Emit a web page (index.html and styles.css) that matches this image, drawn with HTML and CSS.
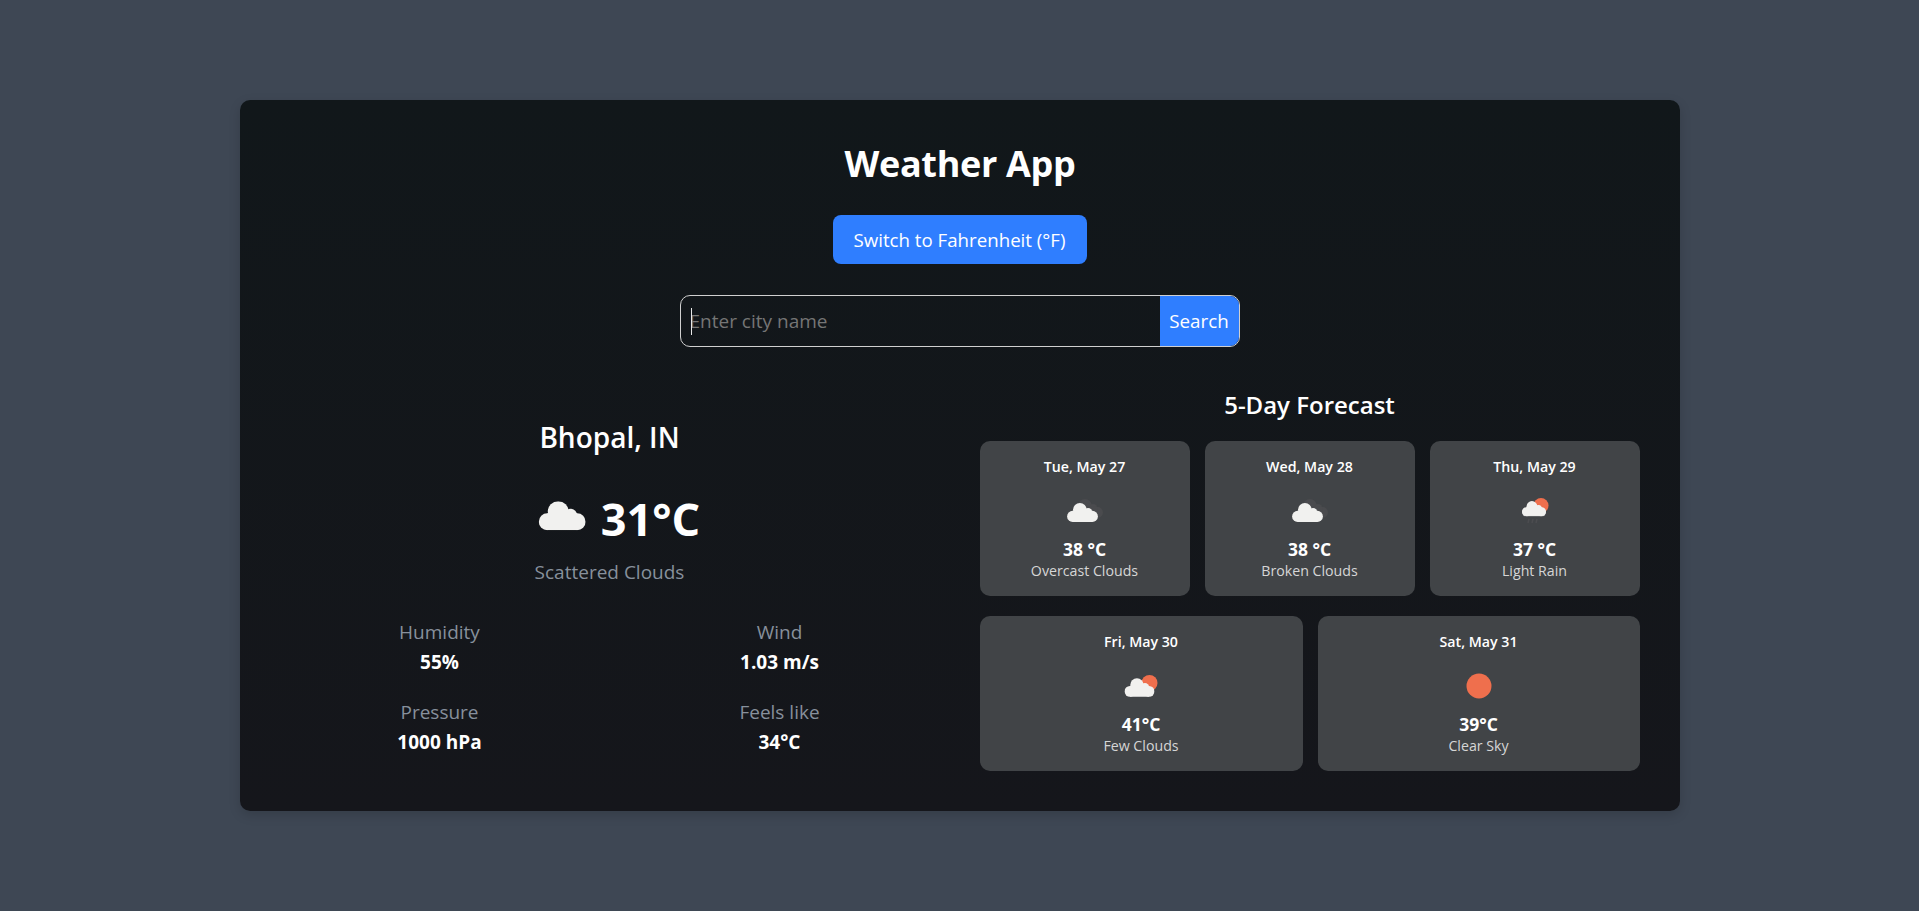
FILE: index.html
```html
<!DOCTYPE html>
<html lang="en-US">
    <head>
        <meta charset="utf-8">
        <title>Weather App</title>
        <meta name="viewport" content="width=device-width, initial-scale=1">
        <link rel="stylesheet" href="styles.css">
    </head>

    <body>
        <svg class="defs" width="0" height="0" aria-hidden="true">
            <symbol id="cloud" viewBox="0 0 47 29">
                <circle cx="8.5" cy="20.5" r="8.5"></circle>
                <circle cx="19.5" cy="10.5" r="10.5"></circle>
                <circle cx="32" cy="14" r="6.5"></circle>
                <circle cx="38.5" cy="20.5" r="8.5"></circle>
                <rect x="8.5" y="12" width="30" height="17"></rect>
            </symbol>
        </svg>

        <main class="app">
            <h1 class="title">Weather App</h1>
            <button class="unitBtn" type="button">Switch to Fahrenheit (°F)</button>

            <form class="search">
                <span class="caret"></span>
                <input class="searchInput" type="text" placeholder="Enter city name">
                <button class="searchBtn" type="button">Search</button>
            </form>

            <div class="columns">
                <section class="current">
                    <h2 class="city">Bhopal, IN</h2>
                    <div class="nowRow">
                        <svg class="nowIcon" viewBox="0 0 50 50">
                            <use href="#cloud" x="7" y="14" width="31" height="19" fill="#f1f1ef"></use>
                        </svg>
                        <span class="nowTemp">31°C</span>
                    </div>
                    <p class="nowDesc">Scattered Clouds</p>
                    <div class="stats">
                        <div class="stat"><span class="statLabel">Humidity</span><strong class="statValue">55%</strong></div>
                        <div class="stat"><span class="statLabel">Wind</span><strong class="statValue">1.03 m/s</strong></div>
                        <div class="stat"><span class="statLabel">Pressure</span><strong class="statValue">1000 hPa</strong></div>
                        <div class="stat"><span class="statLabel">Feels like</span><strong class="statValue">34°C</strong></div>
                    </div>
                </section>

                <section class="forecast">
                    <h2 class="forecastTitle">5-Day Forecast</h2>
                    <div class="dayRow dayRow3">
                        <div class="day">
                            <h3 class="dayDate">Tue, May 27</h3>
                            <svg class="dayIcon" viewBox="0 0 50 50">
                                <use href="#cloud" x="12" y="13" width="31" height="19" fill="#4a4b4e"></use>
                                <use href="#cloud" x="7" y="17" width="31" height="19" fill="#f1f1ef"></use>
                            </svg>
                            <p class="dayTemp">38 °C</p>
                            <p class="dayDesc">Overcast Clouds</p>
                        </div>
                        <div class="day">
                            <h3 class="dayDate">Wed, May 28</h3>
                            <svg class="dayIcon" viewBox="0 0 50 50">
                                <use href="#cloud" x="12" y="13" width="31" height="19" fill="#4a4b4e"></use>
                                <use href="#cloud" x="7" y="17" width="31" height="19" fill="#f1f1ef"></use>
                            </svg>
                            <p class="dayTemp">38 °C</p>
                            <p class="dayDesc">Broken Clouds</p>
                        </div>
                        <div class="day">
                            <h3 class="dayDate">Thu, May 29</h3>
                            <svg class="dayIcon" viewBox="0 0 50 50">
                                <circle cx="31" cy="19.5" r="7.5" fill="#ef6f4d"></circle>
                                <use href="#cloud" x="12" y="15.5" width="24" height="15" fill="#c9c9c8"></use>
                                <use href="#cloud" x="12" y="15" width="24" height="15" fill="#f1f1ef"></use>
                                <path d="M19 33l-1 4M23 33l-1 4M27 33l-1 4" stroke="#4c4d50" stroke-width="1.5"></path>
                            </svg>
                            <p class="dayTemp">37 °C</p>
                            <p class="dayDesc">Light Rain</p>
                        </div>
                    </div>
                    <div class="dayRow dayRow2">
                        <div class="day">
                            <h3 class="dayDate">Fri, May 30</h3>
                            <svg class="dayIcon" viewBox="0 0 50 50">
                                <circle cx="33.5" cy="22" r="8" fill="#ef6f4d"></circle>
                                <use href="#cloud" x="8.5" y="17" width="30" height="19" fill="#f1f1ef"></use>
                            </svg>
                            <p class="dayTemp">41°C</p>
                            <p class="dayDesc">Few Clouds</p>
                        </div>
                        <div class="day">
                            <h3 class="dayDate">Sat, May 31</h3>
                            <svg class="dayIcon" viewBox="0 0 50 50">
                                <circle cx="25" cy="25" r="12.5" fill="#ef6f4d"></circle>
                            </svg>
                            <p class="dayTemp">39°C</p>
                            <p class="dayDesc">Clear Sky</p>
                        </div>
                    </div>
                </section>
            </div>
        </main>
    </body>
</html>
```

FILE: styles.css
```css
* {
    box-sizing: border-box;
}

body {
    margin: 0;
    height: 911px;
    padding-top: 100px;
    overflow: hidden;
    background-color: #3e4754;
    color: #fff;
    font-family: "Open Sans", "Noto Sans", sans-serif;
}

.defs {
    position: absolute;
}

h1, h2, h3, p {
    margin: 0;
}

.app {
    display: flex;
    flex-direction: column;
    align-items: center;
    width: 1440px;
    margin: 0 auto;
    padding: 40px 40px 40px 30px;
    border-radius: 10px;
    background: linear-gradient(#11171a, #15161b);
    box-shadow: 0 4px 12px rgba(0, 0, 0, 0.15);
}

.title {
    margin-left: 11px;
    font-size: 36px;
    letter-spacing: -0.3px;
    line-height: 48px;
    font-weight: 700;
}

.unitBtn {
    width: 254px;
    height: 49px;
    margin: 27px 0 0 10px;
    padding: 0;
    border: 0;
    border-radius: 8px;
    background-color: #2f7eff;
    color: #fff;
    font: inherit;
    font-size: 18.7px;
}

.search {
    position: relative;
    display: flex;
    width: 560px;
    height: 52px;
    margin: 31px 0 0 10px;
    border: 1px solid #d0d0d0;
    border-radius: 10px;
    overflow: hidden;
}

.caret {
    position: absolute;
    left: 10px;
    top: 12px;
    width: 1px;
    height: 27px;
    background-color: #e8e8e8;
}

.searchInput {
    flex: 1;
    min-width: 0;
    padding: 0 9px;
    border: 0;
    outline: 0;
    background-color: transparent;
    color: #fff;
    font: inherit;
    font-size: 19px;
}

.searchInput::placeholder {
    color: #757575;
    opacity: 1;
}

.searchBtn {
    width: 79px;
    padding: 0;
    border: 0;
    background-color: #2f7eff;
    color: #fff;
    font: inherit;
    font-size: 18.8px;
}

.columns {
    display: grid;
    grid-template-columns: 680px 660px;
    gap: 30px;
    width: 100%;
    margin-top: 43px;
}

.current {
    display: flex;
    flex-direction: column;
    align-items: center;
    padding-top: 30px;
}

.city {
    font-size: 28px;
    line-height: 34px;
    font-weight: 600;
}

.nowRow {
    display: flex;
    align-items: center;
    height: 76px;
    margin: 26px 0 0 9px;
}

.nowIcon {
    width: 76px;
    height: 76px;
    margin-right: -3px;
}

.nowTemp {
    font-size: 45px;
    font-weight: 700;
}

.nowDesc {
    margin-top: 4px;
    font-size: 19px;
    line-height: 24px;
    color: #87909c;
}

.stats {
    display: grid;
    grid-template-columns: 1fr 1fr;
    row-gap: 26px;
    width: 100%;
    margin-top: 36px;
}

.stat {
    display: flex;
    flex-direction: column;
    align-items: center;
    gap: 6px;
}

.statLabel {
    font-size: 19px;
    line-height: 24px;
    color: #87909c;
}

.statValue {
    font-size: 19px;
    line-height: 24px;
    font-weight: 700;
}

.forecastTitle {
    font-size: 24px;
    line-height: 29px;
    font-weight: 600;
    text-align: center;
}

.dayRow {
    display: grid;
    gap: 15px;
    margin-top: 20px;
}

.dayRow3 {
    grid-template-columns: repeat(3, 1fr);
    margin-top: 22px;
}

.dayRow2 {
    grid-template-columns: 323px 322px;
}

.day {
    display: flex;
    flex-direction: column;
    align-items: center;
    height: 155px;
    padding-top: 16px;
    border-radius: 10px;
    background-color: #414447;
}

.dayDate {
    font-size: 14.2px;
    line-height: 20px;
    font-weight: 600;
}

.dayIcon {
    display: block;
    width: 50px;
    height: 50px;
    margin-top: 9px;
}

.dayTemp {
    margin-top: 1px;
    font-size: 17.5px;
    line-height: 24px;
    font-weight: 700;
}

.dayDesc {
    font-size: 14.2px;
    line-height: 20px;
    color: #d6d6d6;
}
```
